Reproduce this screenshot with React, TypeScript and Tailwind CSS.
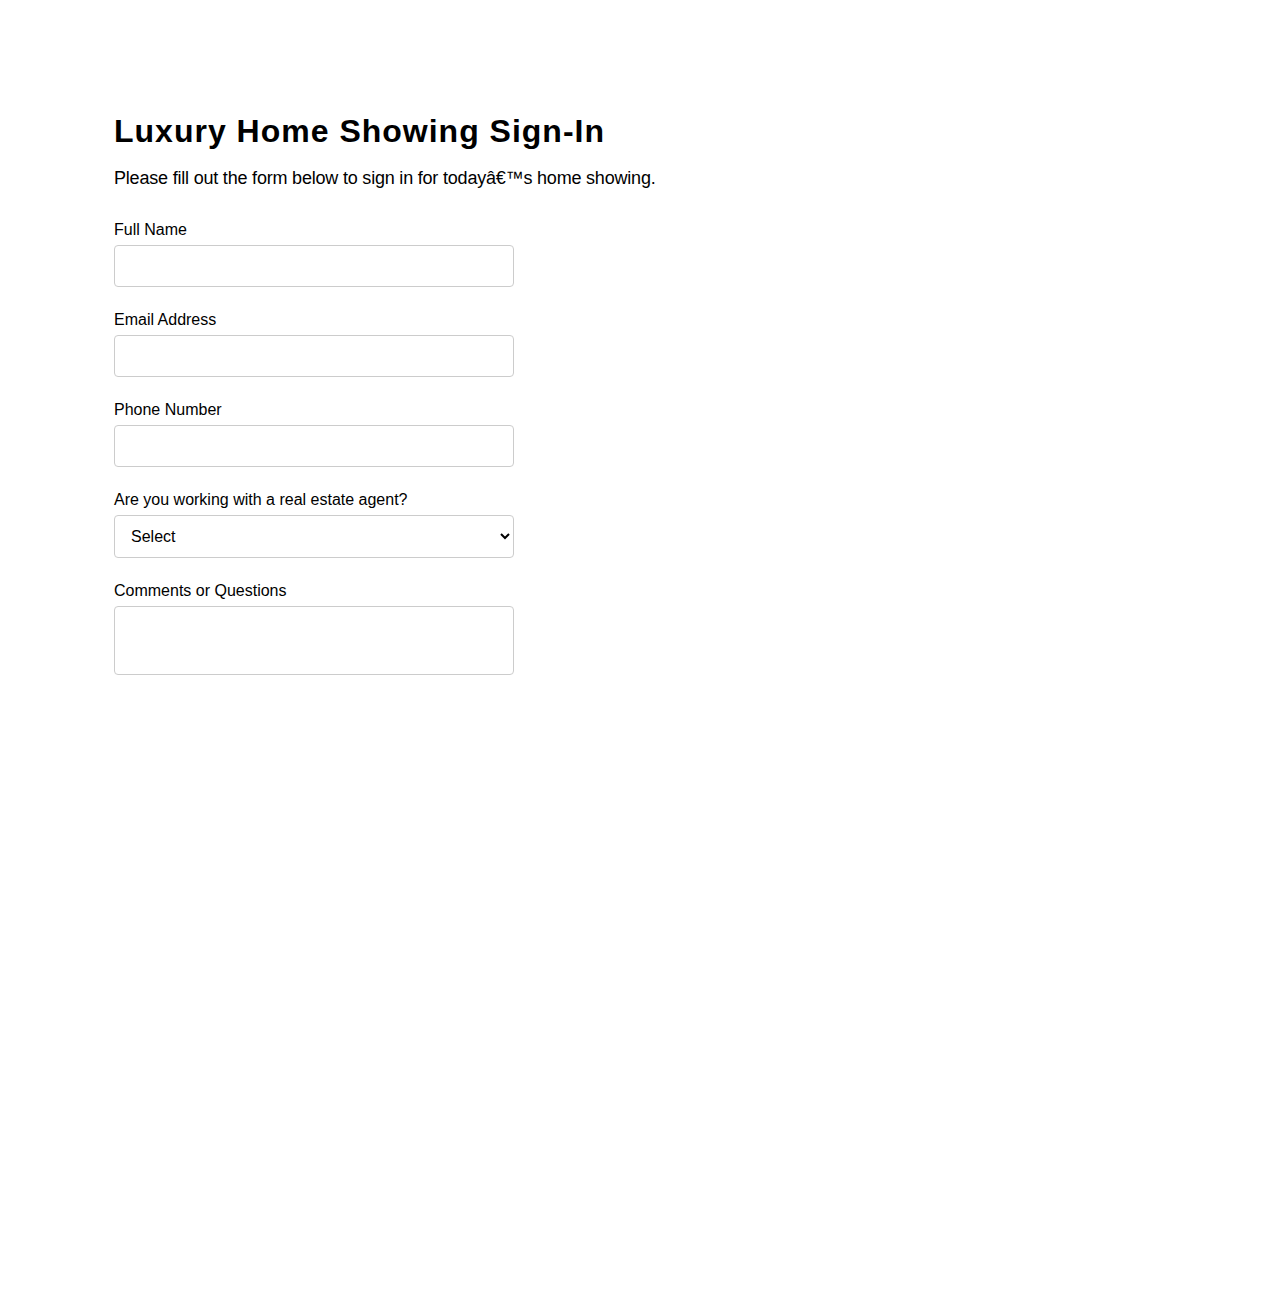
export default function App() {
  const fieldClass =
    'block w-[400px] h-[42px] border border-[#cccccc] rounded-[4px] px-4 text-base text-black bg-white outline-none'

  return (
    <div className="min-h-[1300px] bg-white font-['Liberation_Sans',Arial,sans-serif] text-black">
      <div className="max-w-[1050px] mx-auto pt-[113px]">
        <h1 className="text-[32px] leading-[37px] font-bold tracking-[1px]">Luxury Home Showing Sign-In</h1>
        <p className="mt-[18px] text-[18px] leading-[21px] tracking-[-0.2px]">
          Please fill out the form below to sign in for todayâ€™s home showing.
        </p>

        <form className="mt-[32px] flex flex-col gap-[24px]">
          <div>
            <label className="block text-base leading-[18px] mb-[6px]">Full Name</label>
            <input type="text" className={fieldClass} />
          </div>
          <div>
            <label className="block text-base leading-[18px] mb-[6px]">Email Address</label>
            <input type="email" className={fieldClass} />
          </div>
          <div>
            <label className="block text-base leading-[18px] mb-[6px]">Phone Number</label>
            <input type="tel" className={fieldClass} />
          </div>
          <div>
            <label className="block text-base leading-[18px] mb-[6px]">Are you working with a real estate agent?</label>
            <select className="block w-[400px] h-[43px] border border-[#cccccc] rounded-[4px] pl-3 pr-1 text-base text-black bg-white outline-none">
              <option>Select</option>
              <option>Yes</option>
              <option>No</option>
            </select>
          </div>
          <div>
            <label className="block text-base leading-[18px] mb-[6px]">Comments or Questions</label>
            <textarea className="block w-[400px] h-[69px] border border-[#cccccc] rounded-[4px] px-4 py-2 text-base text-black bg-white outline-none resize-none" />
          </div>
        </form>
      </div>
    </div>
  )
}
